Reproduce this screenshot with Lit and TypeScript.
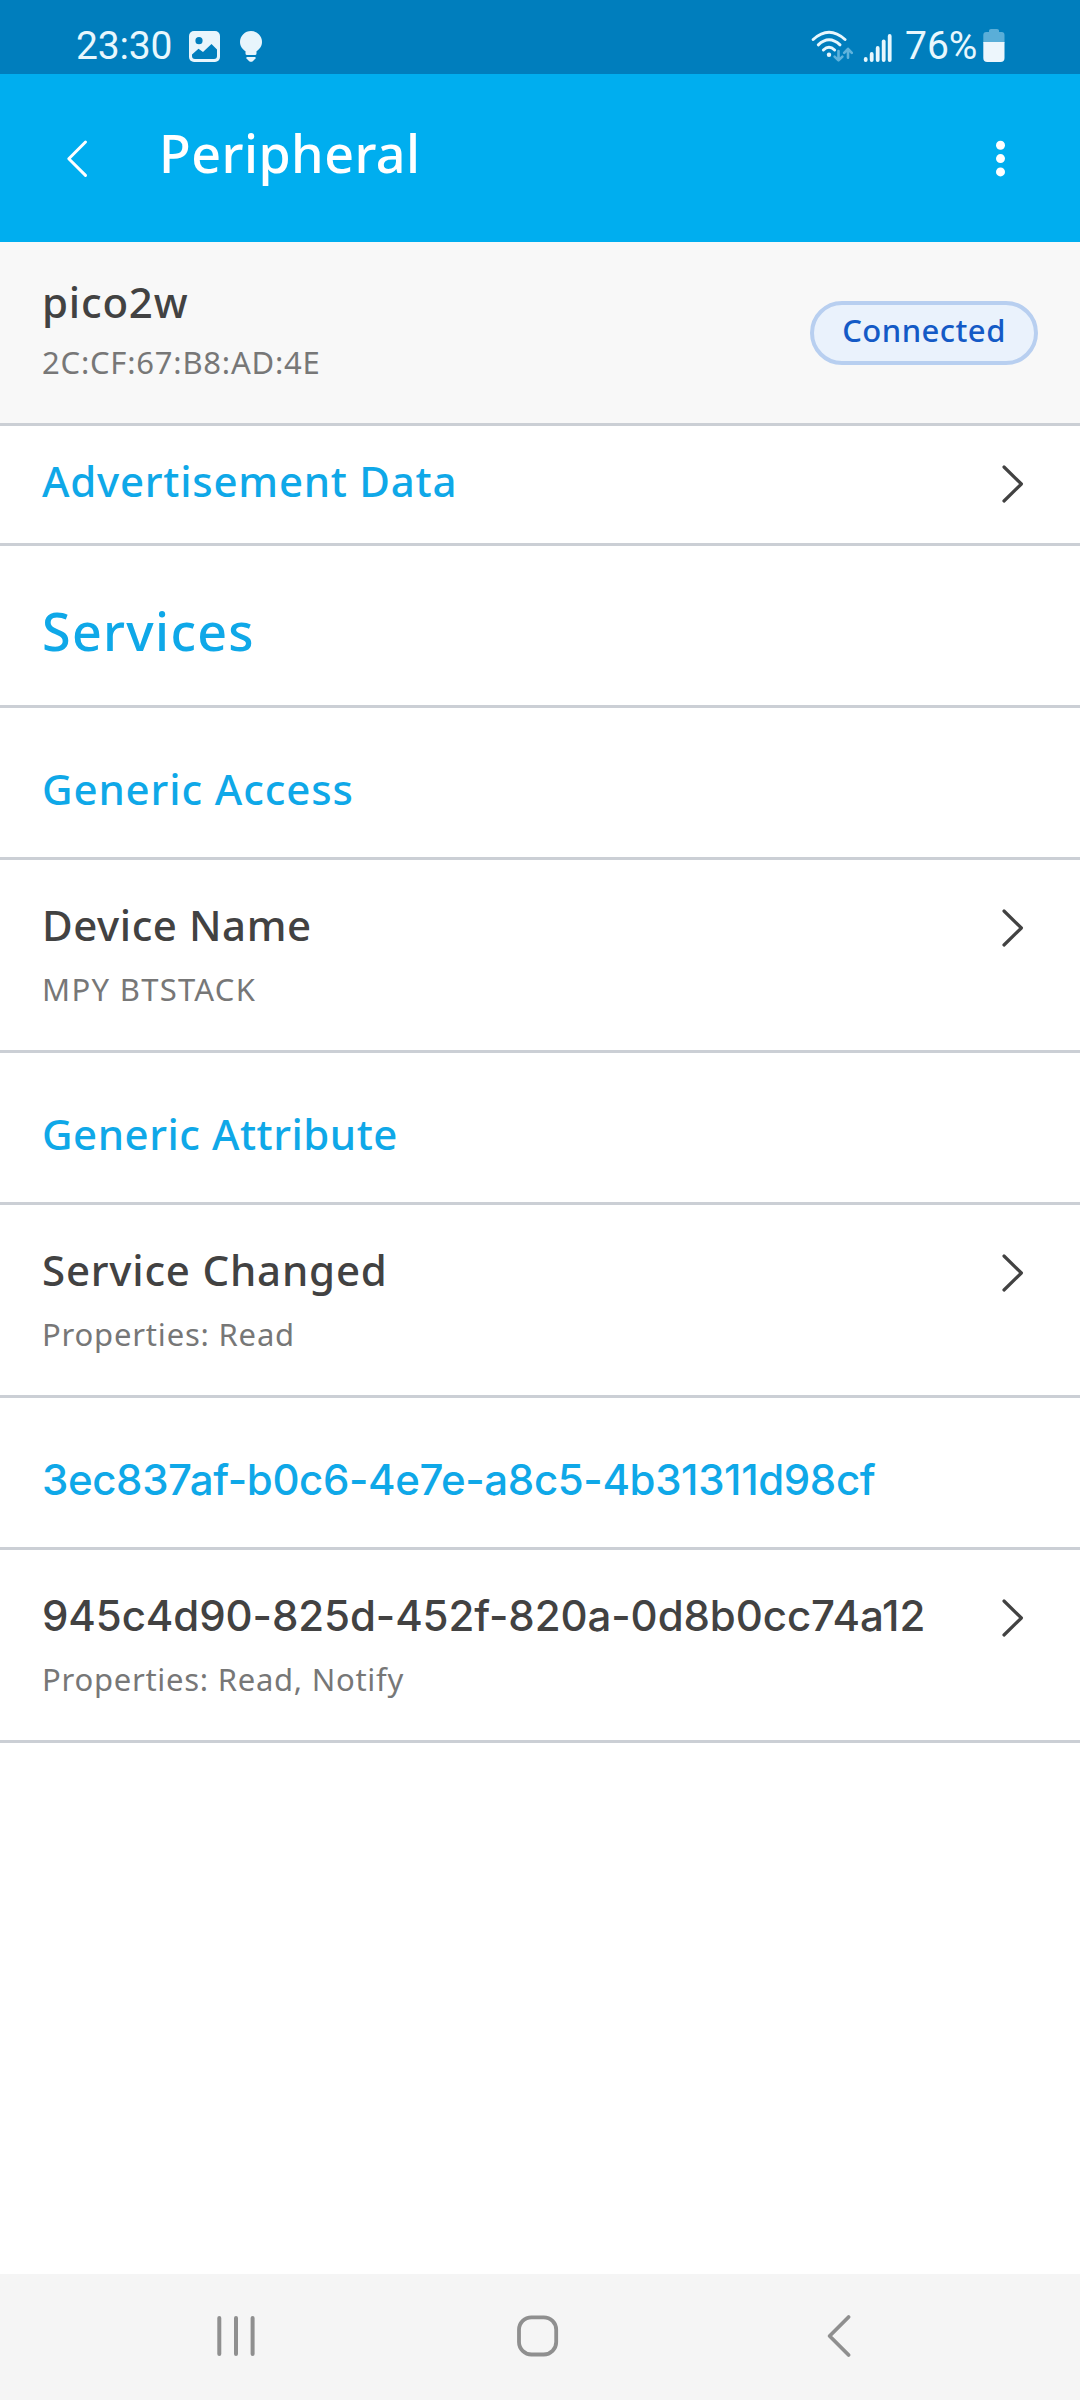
import { LitElement, html, css, svg } from "lit";
import { customElement } from "lit/decorators.js";
import { styleMap } from "lit/directives/style-map.js";
import { classMap } from "lit/directives/class-map.js";

interface Label {
  text: string;
  /** Letter spacing in px. */
  tracking: number;
  /** UUID labels use the typeface with narrow ones. */
  uuid?: boolean;
}

interface Characteristic {
  title: Label;
  detail: Label;
}

interface Service {
  name: Label;
  characteristics: Characteristic[];
}

const services: Service[] = [
  {
    name: { text: "Generic Access", tracking: 0.88 },
    characteristics: [
      {
        title: { text: "Device Name", tracking: 0.55 },
        detail: { text: "MPY BTSTACK", tracking: 1.3 },
      },
    ],
  },
  {
    name: { text: "Generic Attribute", tracking: 0.52 },
    characteristics: [
      {
        title: { text: "Service Changed", tracking: 0.8 },
        detail: { text: "Properties: Read", tracking: 0.8 },
      },
    ],
  },
  {
    name: { text: "3ec837af-b0c6-4e7e-a8c5-4b31311d98cf", tracking: -0.38, uuid: true },
    characteristics: [
      {
        title: { text: "945c4d90-825d-452f-820a-0d8b0cc74a12", tracking: -0.09, uuid: true },
        detail: { text: "Properties: Read, Notify", tracking: 0.73 },
      },
    ],
  },
];

const label = (l: Label, kind: string) => html`<div
  class=${classMap({ [kind]: true, uuid: !!l.uuid })}
  style=${styleMap({ letterSpacing: `${l.tracking}px` })}
>${l.text}</div>`;

const chevron = html`<svg class="chevron" width="24" height="40" viewBox="0 0 24 40">
  <path d="M3 3L20.4 20L3 37" fill="none" stroke="#424242" stroke-width="3.2" stroke-linecap="round" stroke-linejoin="round" />
</svg>`;

@customElement("app-root")
export class AppRoot extends LitElement {
  static styles = css`
    :host {
      display: flex;
      flex-direction: column;
      width: 1080px;
      height: 2400px;
      overflow: hidden;
      background: #fff;
      color: #424242;
      font-family: "Noto Sans", sans-serif;
    }
    * {
      box-sizing: border-box;
    }
    svg {
      display: block;
      flex: none;
    }
    .status {
      height: 74px;
      padding: 23px 75px 0 76px;
      background: #007ebd;
      color: #e8f7fd;
      display: flex;
      justify-content: space-between;
      font: 400 39px/46px Roboto, sans-serif;
      flex: none;
    }
    .group {
      display: flex;
      align-items: flex-start;
    }
    .group svg {
      margin-top: 6px;
    }
    .group .photo,
    .group .bulb {
      margin-top: 8px;
    }
    .time {
      width: 95px;
      letter-spacing: -0.2px;
    }
    .photo {
      margin-left: 18px;
    }
    .bulb {
      margin-left: 20px;
    }
    .signal {
      margin-left: 10px;
    }
    .percent {
      width: 73px;
      margin-left: 13px;
    }
    .battery {
      margin-left: 5px;
    }
    .bar {
      height: 168px;
      flex: none;
      background: #00aeef;
      color: #fff;
      display: flex;
      padding: 0 72px 0 65px;
    }
    .back {
      margin-top: 64px;
    }
    .heading {
      flex: 1;
      margin: 46px 0 0 70px;
      font-size: 52px;
      line-height: 66px;
      font-weight: 500;
      letter-spacing: 0.45px;
    }
    .more {
      margin-top: 66px;
    }
    .row {
      flex: none;
      display: flex;
      justify-content: space-between;
      align-items: flex-start;
      padding: 0 55px 0 42px;
      border-bottom: 3px solid #cbcfd5;
    }
    .device {
      height: 184px;
      padding: 31px 42px 0 42px;
      background: #f8f8f8;
    }
    .title {
      font-size: 42px;
      line-height: 58px;
      font-weight: 500;
      white-space: nowrap;
    }
    .detail {
      font-size: 31px;
      line-height: 42px;
      color: #777;
      margin-top: 14px;
      white-space: nowrap;
    }
    .device .detail {
      margin-top: 10px;
    }
    .accent {
      color: #0fa8e8;
      font-size: 42px;
      line-height: 58px;
      font-weight: 500;
      white-space: nowrap;
    }
    .uuid {
      font-family: Inter, "Noto Sans", sans-serif;
      font-feature-settings: "calt" 0;
      padding-top: 1px;
      margin-bottom: -1px;
    }
    .badge {
      margin-top: 28px;
      width: 228px;
      height: 64px;
      border: 4px solid #b8cff0;
      border-radius: 32px;
      background: #eaf2fc;
      color: #145ac6;
      font-size: 31px;
      line-height: 51px;
      font-weight: 500;
      letter-spacing: 0.48px;
      text-align: center;
    }
    .advert {
      height: 120px;
      padding-top: 26px;
    }
    .advert .chevron {
      margin-top: 12px;
    }
    .section {
      height: 162px;
      padding-top: 52px;
      font-size: 52px;
      line-height: 66px;
      font-weight: 500;
      color: #0fa8e8;
      letter-spacing: 1.3px;
    }
    .service {
      height: 152px;
      padding-top: 52px;
    }
    .item {
      height: 193px;
      padding-top: 36px;
    }
    .item .chevron {
      margin-top: 12px;
    }
    .nav {
      margin-top: auto;
      height: 126px;
      flex: none;
      background: #f5f5f5;
      display: flex;
      align-items: flex-start;
      padding: 40px 226px 0 216px;
    }
    .home {
      margin-left: 260px;
      margin-right: 266px;
    }
  `;

  private statusBar() {
    return html`<div class="status">
      <div class="group">
        <div class="time">23:30</div>
        <svg class="photo" width="31" height="31" viewBox="0 0 31 31">
          <rect width="31" height="31" rx="5" fill="#e8f5fc" />
          <circle cx="10" cy="9.7" r="3.6" fill="#007ebd" />
          <path d="M3 23.5L9.5 17.7L14 21L22.5 13L28 18.5V25Q28 28 25 28H6Q3 28 3 25Z" fill="#007ebd" />
        </svg>
        <svg class="bulb" width="22" height="31" viewBox="0 0 22 31">
          <path d="M11 0A11 11 0 0 1 22 11C22 15.5 19.5 18 16.5 20.3V22.5Q16.5 24 15 24H7Q5.5 24 5.5 22.5V20.3C2.5 18 0 15.5 0 11A11 11 0 0 1 11 0Z" fill="#e8f5fc" />
          <path d="M6.5 26H15.5V27.5L12.8 30.2Q11 31.4 9.2 30.2L6.5 27.5Z" fill="#e8f5fc" />
        </svg>
      </div>
      <div class="group">
        <svg width="42" height="34" viewBox="0 0 42 34">
          <g fill="none" stroke="#e8f7fd" stroke-width="3" stroke-linecap="round">
            <path d="M2.2 10.5Q18 -4 34 10.5" />
            <path d="M7.3 15.8Q18 5.7 29 15.8" />
            <path d="M12.4 21Q18 15.5 23.6 21" />
          </g>
          <circle cx="18" cy="25.8" r="2.2" fill="#e8f7fd" />
          <g fill="none" stroke="#5fb3dc" stroke-width="2.6" stroke-linecap="round" stroke-linejoin="round">
            <path d="M27.5 22V31.2M23.6 27.6L27.5 31.4L31.4 27.6" />
            <path d="M37 28.8V20M33.2 23.8L37 19.8L40.8 23.8" />
          </g>
        </svg>
        <svg class="signal" width="29" height="36" viewBox="0 0 29 36">
          ${[28, 23, 17, 10.5, 5].map(
            (top, i) =>
              svg`<rect x=${0.8 + i * 6} y=${top} width="3.8" height=${33 - top} rx="1.9" fill="#e8f7fd" />`,
          )}
        </svg>
        <div class="percent">76%</div>
        <svg class="battery" width="22" height="36" viewBox="0 0 22 36">
          <path d="M0.3 14V6Q0.3 3 3.3 3H6V1.5Q6 0 8 0H14Q16 0 16 1.5V3H18.7Q21.5 3 21.5 6V14Z" fill="#5aaed8" />
          <path d="M0.3 13H21.5V29Q21.5 33 17.5 33H4.3Q0.3 33 0.3 29Z" fill="#edf6fc" />
        </svg>
      </div>
    </div>`;
  }

  render() {
    return html`
      ${this.statusBar()}
      <div class="bar">
        <svg class="back" width="24" height="42" viewBox="0 0 24 42">
          <path d="M20.5 4L3.8 20.7L20.5 37.4" fill="none" stroke="#fff" stroke-width="3" stroke-linecap="round" stroke-linejoin="round" />
        </svg>
        <div class="heading">Peripheral</div>
        <svg class="more" width="14" height="38" viewBox="0 0 14 38">
          <circle cx="6.5" cy="5.3" r="4.5" fill="#fff" />
          <circle cx="6.5" cy="18.6" r="4.5" fill="#fff" />
          <circle cx="6.5" cy="31.9" r="4.5" fill="#fff" />
        </svg>
      </div>
      <div class="row device">
        <div>
          ${label({ text: "pico2w", tracking: 0.8 }, "title")}
          ${label({ text: "2C:CF:67:B8:AD:4E", tracking: 0.78 }, "detail")}
        </div>
        <div class="badge">Connected</div>
      </div>
      <div class="row advert">${label({ text: "Advertisement Data", tracking: 0.76 }, "accent")}${chevron}</div>
      <div class="row section">Services</div>
      ${services.map(
        (service) => html`
          <div class="row service">${label(service.name, "accent")}</div>
          ${service.characteristics.map(
            (c) => html`<div class="row item">
              <div>${label(c.title, "title")}${label(c.detail, "detail")}</div>
              ${chevron}
            </div>`,
          )}
        `,
      )}
      <div class="nav">
        <svg width="40" height="44" viewBox="0 0 40 44">
          <path d="M3.3 4V40M20 4V40M36.6 4V40" stroke="#8f8f8f" stroke-width="4" stroke-linecap="round" />
        </svg>
        <svg class="home" width="44" height="44" viewBox="0 0 44 44">
          <rect x="3" y="3.3" width="37.2" height="37.2" rx="12.5" fill="none" stroke="#8f8f8f" stroke-width="3.8" />
        </svg>
        <svg width="26" height="44" viewBox="0 0 26 44">
          <path d="M22.6 3L3.6 22L22.6 41" fill="none" stroke="#8f8f8f" stroke-width="3.8" stroke-linecap="round" stroke-linejoin="round" />
        </svg>
      </div>
    `;
  }
}
